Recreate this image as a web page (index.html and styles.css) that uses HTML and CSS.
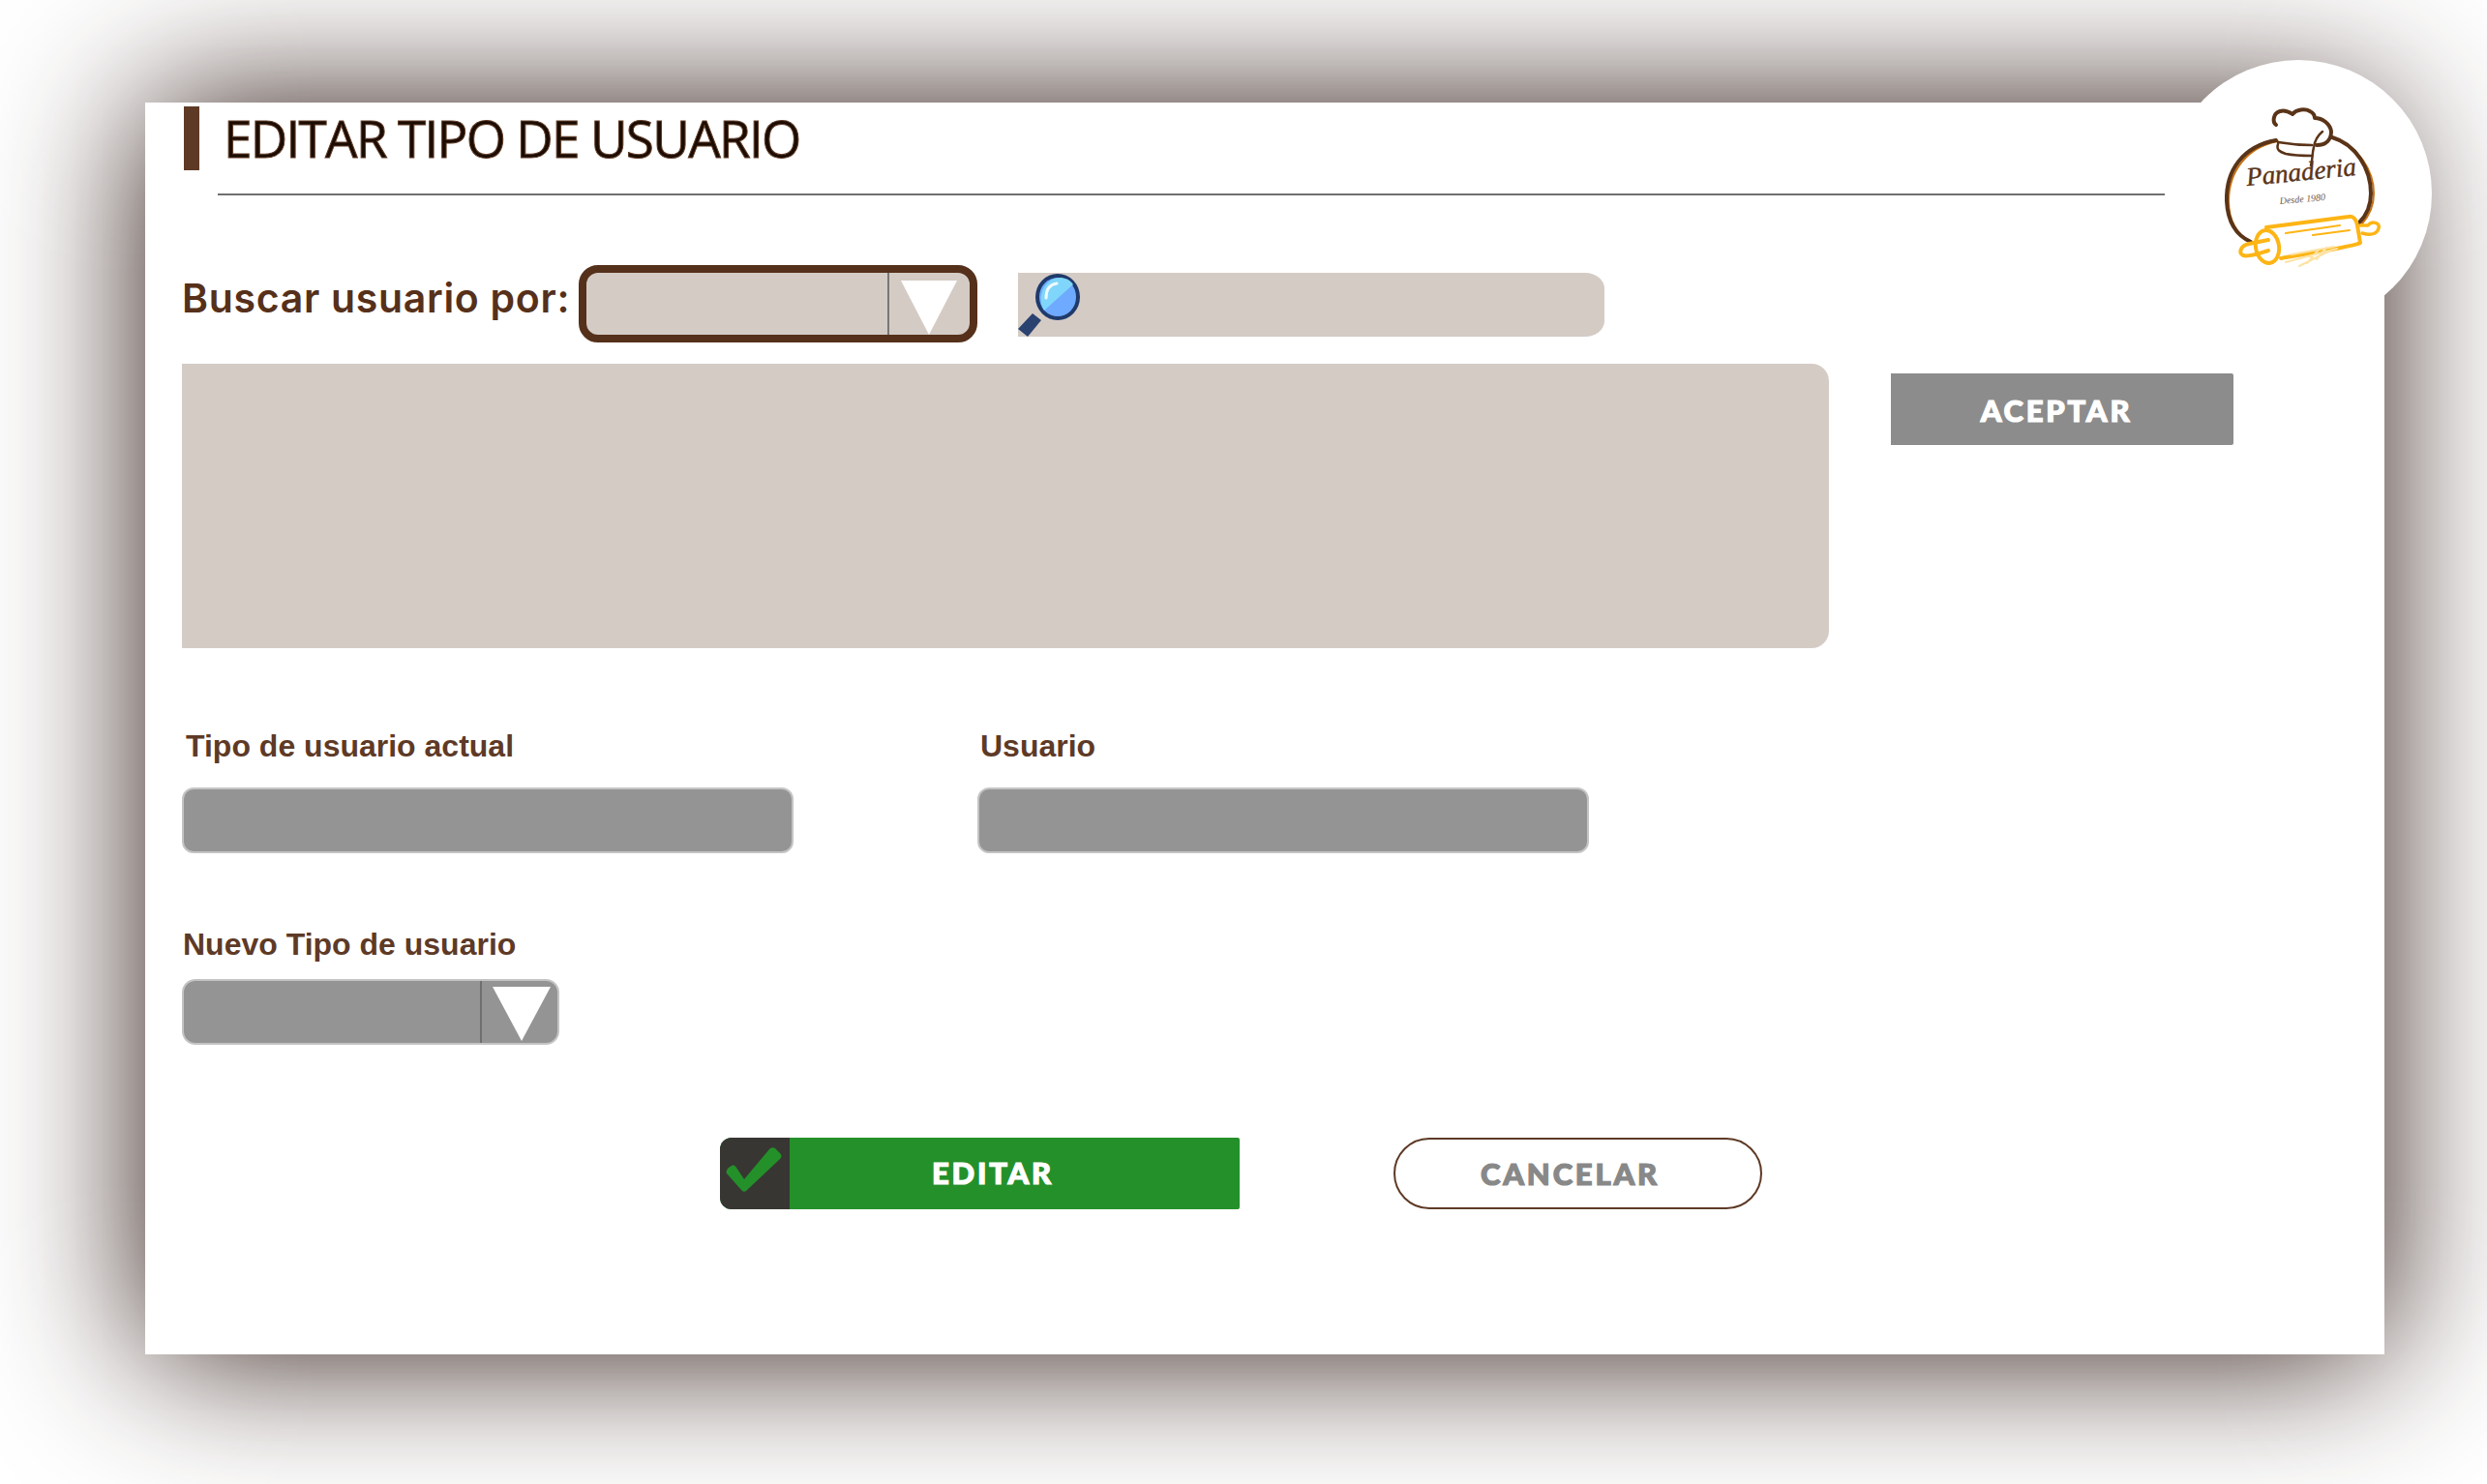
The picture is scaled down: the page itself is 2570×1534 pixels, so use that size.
FILE: index.html
```html
<!DOCTYPE html>
<html lang="es">
  <head>
    <meta charset="UTF-8" />
    <meta name="viewport" content="width=device-width, initial-scale=1.0" />
    <title>Editar tipo de usuario</title>
    <link rel="stylesheet" href="styles.css">
  </head>
  <body>
    <div class="modal">
      <div class="logo">
        <svg viewBox="0 0 200 190" width="200" height="190">
          <g fill="none" stroke-linecap="round" stroke-linejoin="round">
            <path d="M82 46C50 52 31 77 31 108C31 128 40 144 56 152" stroke="#c8710f" stroke-width="2"/>
            <path d="M80 45C46 51 28 76 29 108C30 128 38 143 54 150" stroke="#5a3418" stroke-width="4"/>
            <path d="M139 43C165 51 181 76 181 100C181 112 177 122 169 131" stroke="#c8710f" stroke-width="2"/>
            <path d="M138 42C162 49 178 74 178 100C178 112 174 122 166 130" stroke="#5a3418" stroke-width="4"/>
            <path d="M80 29C76 26 77 17 84 15C90 13 94 16 97 18C101 13 110 12 115 15C119 17 120 20 120 22C128 22 136 28 137 36C137 44 132 50 122 50" stroke="#5a3418" stroke-width="4"/>
            <path d="M128 36C123 40 120 46 119 52C117 60 118 65 116 71" stroke="#5a3418" stroke-width="2.5"/>
            <path d="M82 47C94 49 106 50 117 50M82 49C80 55 84 57 90 59C100 61 108 61 117 61" stroke="#5a3418" stroke-width="2.5"/>
            <path d="M70 135L155 124C160 123 163 127 164 133L167 151C160 155 120 161 85 167" stroke="#fdb515" stroke-width="4"/>
            <ellipse cx="71" cy="155" rx="12" ry="17" transform="rotate(-10 71 155)" stroke="#fdb515" stroke-width="4"/>
            <path d="M72 148L52 152C43 154 41 162 46 164C52 166 62 162 72 159" stroke="#fdb515" stroke-width="4"/>
            <path d="M167 133L175 133C179 128 188 130 186 136C184 143 176 143 169 141" stroke="#fdb515" stroke-width="3.5"/>
            <path d="M90 141L146 133M118 143L156 138" stroke="#fdb515" stroke-width="2"/>
            <path d="M90 171L143 157M96 163L140 155M104 175L134 160M112 172L124 158M122 168L132 156" stroke="#fde3a5" stroke-width="2"/>
          </g>
          <text class="logo-name" x="50" y="92" transform="rotate(-5.5 50 92)">Panaderia</text>
          <text class="logo-since" x="84" y="111" transform="rotate(-5 84 111)">Desde 1980</text>
        </svg>
      </div>

      <header class="modal-head">
        <span class="head-bar"></span>
        <h1>EDITAR TIPO DE USUARIO</h1>
      </header>
      <div class="head-rule"></div>

      <div class="search-row">
        <label class="search-label">Buscar usuario por:</label>
        <div class="select select-strong">
          <span class="select-value"></span>
          <span class="arrow"></span>
        </div>
        <div class="search-box">
          <svg viewBox="0 0 66 66" width="66" height="66">
            <path d="M15 42L24 49L10 66L0 58Z" fill="#2a4270"/>
            <ellipse cx="41" cy="25" rx="23" ry="24" fill="#1f3a6b"/>
            <ellipse cx="41" cy="25" rx="19" ry="20" fill="#6eaaff"/>
            <path d="M27 39C20 28 24 12 37 6C44 4 52 5 57 12Z" fill="#7fd6fa"/>
            <path d="M29 26C29 17 33 12 40 11" fill="none" stroke="#f1fbff" stroke-width="3" stroke-linecap="round"/>
          </svg>
        </div>
      </div>

      <div class="results-row">
        <div class="results"></div>
        <button class="btn-accept">ACEPTAR</button>
      </div>

      <div class="fields">
        <div class="field">
          <label class="field-label label-current">Tipo de usuario actual</label>
          <div class="input"></div>
        </div>
        <div class="field">
          <label class="field-label label-user">Usuario</label>
          <div class="input"></div>
        </div>
      </div>

      <div class="field field-new">
        <label class="field-label">Nuevo Tipo de usuario</label>
        <div class="select select-gray">
          <span class="select-value"></span>
          <span class="arrow"></span>
        </div>
      </div>

      <div class="actions">
        <button class="btn-edit">
          <span class="check">
            <svg viewBox="0 0 58 46" width="58" height="46">
              <path d="M1 27C0 25 1 23 3 21L6 19C8 18 10 19 11 21L19 33L45 2C47 0 49 0 51 1L56 6C58 8 58 10 56 12L21 45C20 46 18 46 17 45Z" fill="#24902a"/>
            </svg>
          </span>
          <span class="btn-edit-text">EDITAR</span>
        </button>
        <button class="btn-cancel">CANCELAR</button>
      </div>
    </div>
  </body>
</html>
```

FILE: styles.css
```css
* {
  box-sizing: border-box;
}

body {
  margin: 0;
  width: 2570px;
  height: 1534px;
  padding: 106px 0 0 150px;
  background: #fff;
  overflow: hidden;
  font-family: "Liberation Sans", Arial, sans-serif;
}

.modal {
  position: relative;
  width: 2314px;
  height: 1294px;
  padding: 4px 0 0 38px;
  background: #fff;
  box-shadow: 0 0 150px #2e1a14;
}

.logo {
  position: absolute;
  left: 2087px;
  top: -44px;
  width: 276px;
  height: 276px;
  padding: 38px 0 0 35px;
  border-radius: 50%;
  background: #fff;
}

.logo-name {
  font-family: "Liberation Serif", serif;
  font-style: italic;
  font-size: 27px;
  fill: #5a3418;
  stroke: #5a3418;
  stroke-width: 0.4px;
}

.logo-since {
  font-family: "Liberation Serif", serif;
  font-style: italic;
  font-size: 10px;
  fill: #6f5a4d;
}

.modal-head {
  display: flex;
  gap: 25px;
  margin-left: 2px;
  height: 66px;
}

.head-bar {
  width: 16px;
  background: #5e3a26;
}

h1 {
  margin: 0;
  font-family: "Open Sans", sans-serif;
  font-weight: 400;
  font-size: 53px;
  line-height: 66px;
  letter-spacing: -1.7px;
  white-space: nowrap;
  color: #1c0c02;
  -webkit-text-stroke: 1px #5e3a26;
}

.head-rule {
  width: 2012px;
  height: 2px;
  margin: 24px 0 0 37px;
  background: #707070;
}

.search-row {
  display: flex;
  align-items: center;
  margin-top: 72px;
}

.search-label {
  width: 410px;
  padding-bottom: 12px;
  font-family: Inter, sans-serif;
  font-weight: 600;
  font-size: 41px;
  letter-spacing: 0.7px;
  white-space: nowrap;
  color: #56301a;
}

.select {
  position: relative;
  display: flex;
}

.select-value {
  border-right: 2px solid #777;
}

.select-strong {
  width: 412px;
  height: 80px;
  border: 8px solid #55301a;
  border-radius: 20px;
  background: #d4cbc5;
}

.select-strong .select-value {
  width: 313px;
}

.arrow {
  width: 0;
  height: 0;
  border-style: solid;
  border-color: #fff transparent transparent;
}

.select-strong .arrow {
  margin: 8px 0 0 12px;
  border-width: 56px 29px 0;
}

.search-box {
  width: 606px;
  height: 66px;
  margin: 2px 0 0 42px;
  border-radius: 0 20px 20px 0 / 0 16px 16px 0;
  background: #d4cbc5;
}

.search-box svg {
  display: block;
}

.results-row {
  display: flex;
  align-items: flex-start;
  gap: 64px;
  margin-top: 22px;
}

.results {
  width: 1702px;
  height: 294px;
  border-radius: 0 18px 18px 0;
  background: #d4cbc5;
}

button {
  border: none;
  padding: 0;
  font-family: Lato, sans-serif;
  font-weight: 900;
  font-size: 31px;
  letter-spacing: 2.8px;
  -webkit-text-stroke: 1.2px currentColor;
}

.btn-accept {
  width: 354px;
  height: 74px;
  margin-top: 10px;
  padding: 2px 12px 0 0;
  border-radius: 0 2px 2px 0;
  background: #8c8c8c;
  color: #fff;
}

.fields {
  display: grid;
  grid-template-columns: 632px 632px;
  gap: 190px;
  margin-top: 83px;
}

.field-label {
  display: block;
  height: 61px;
  font-weight: 700;
  font-size: 32px;
  line-height: 37px;
  color: #5e3a26;
}

.label-current {
  margin-left: 4px;
}

.label-user {
  margin-left: 3px;
}

.input {
  height: 68px;
  border: 2px solid #c4c4c4;
  border-radius: 12px;
  background: #949494;
}

.field-new {
  margin-top: 76px;
}

.field-new .field-label {
  height: 54px;
  margin-left: 1px;
}

.select-gray {
  width: 390px;
  height: 68px;
  border: 2px solid #c4c4c4;
  border-radius: 14px;
  background: #949494;
}

.select-gray .select-value {
  width: 308px;
  border-right-color: #6f6f6f;
}

.select-gray .arrow {
  margin: 6px 0 0 11px;
  border-width: 56px 30px 0;
}

.actions {
  display: flex;
  gap: 159px;
  margin: 96px 0 0 556px;
}

.btn-edit {
  display: flex;
  width: 537px;
  height: 74px;
  border-radius: 12px 2px 2px 12px;
  overflow: hidden;
  background: #24902a;
  color: #fff;
}

.check {
  width: 72px;
  height: 74px;
  padding: 10px 0 0 6px;
  background: #383633;
}

.check svg {
  display: block;
}

.btn-edit-text {
  width: 420px;
  line-height: 72px;
  text-align: center;
}

.btn-cancel {
  width: 381px;
  height: 74px;
  padding-right: 16px;
  border: 2px solid #5e3a26;
  border-radius: 37px;
  background: #fff;
  color: #888;
}
```
